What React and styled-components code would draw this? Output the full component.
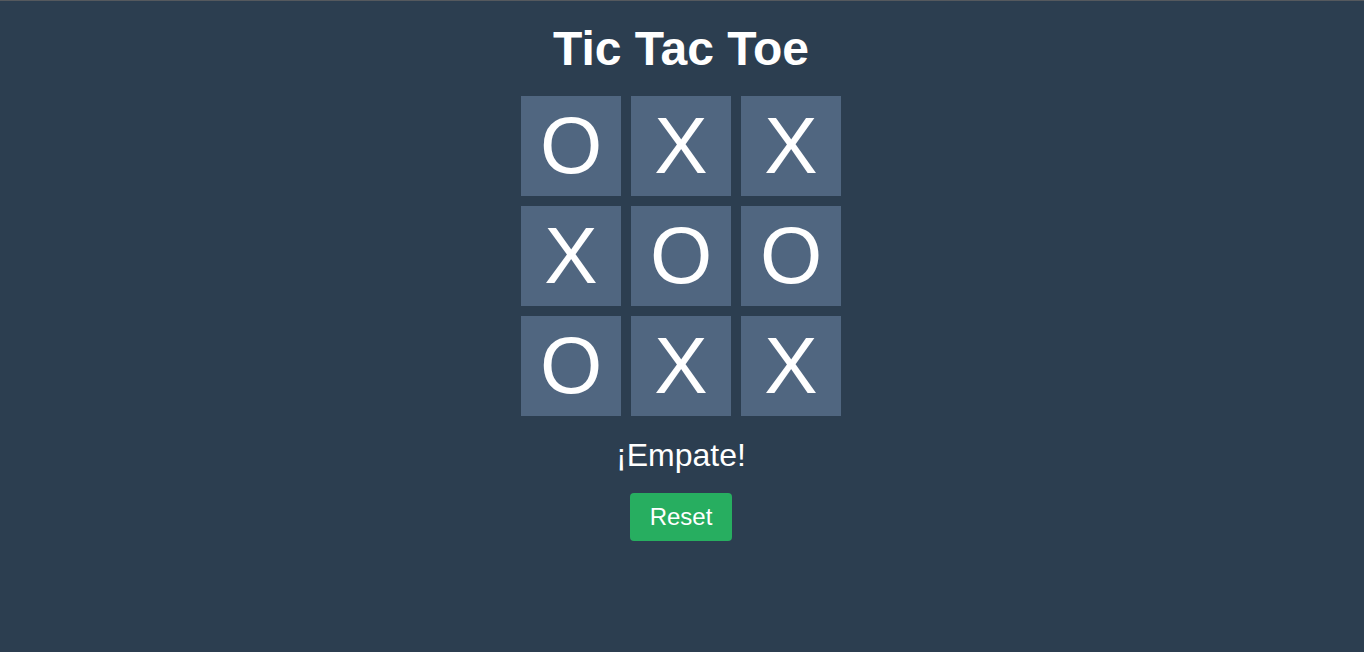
import React, { useState } from "react";
import styled, { createGlobalStyle } from "styled-components";

const GlobalStyle = createGlobalStyle`
  body {
    margin: 0;
    background: #2c3e50;
    font-family: "Liberation Sans", Arial, sans-serif;
    color: #ffffff;
  }
`;

const initialBoard = ["O", "X", "X", "X", "O", "O", "O", "X", "X"];

const App = () => {
  const [board, setBoard] = useState(initialBoard);

  return (
    <>
      <GlobalStyle />
      <Page>
        <Title>Tic Tac Toe</Title>
        <Board>
          {board.map((value, i) => (
            <Cell key={i}>{value}</Cell>
          ))}
        </Board>
        <Status>¡Empate!</Status>
        <ResetButton onClick={() => setBoard(Array(9).fill(""))}>
          Reset
        </ResetButton>
      </Page>
    </>
  );
};

export default App;

const Page = styled.div`
  min-height: 651px;
  border-top: 1px solid #55595e;
  padding: 20px 2px 0 0;
  display: flex;
  flex-direction: column;
  align-items: center;
  box-sizing: border-box;
`;

const Title = styled.h1`
  font-size: 48px;
  font-weight: bold;
  margin: 0 0 20px;
`;

const Board = styled.div`
  display: grid;
  grid-template-columns: repeat(3, 100px);
  grid-auto-rows: 100px;
  gap: 10px;
`;

const Cell = styled.div`
  background: #506680;
  display: flex;
  align-items: center;
  justify-content: center;
  font-size: 80px;
  color: #ffffff;
  cursor: pointer;
`;

const Status = styled.p`
  font-size: 32px;
  margin: 21px 0 19px;
`;

const ResetButton = styled.button`
  background: #27ae60;
  color: #ffffff;
  border: none;
  border-radius: 4px;
  padding: 10px 20px;
  font-family: "Liberation Sans", Arial, sans-serif;
  font-size: 24px;
  line-height: 28px;
  cursor: pointer;
`;
